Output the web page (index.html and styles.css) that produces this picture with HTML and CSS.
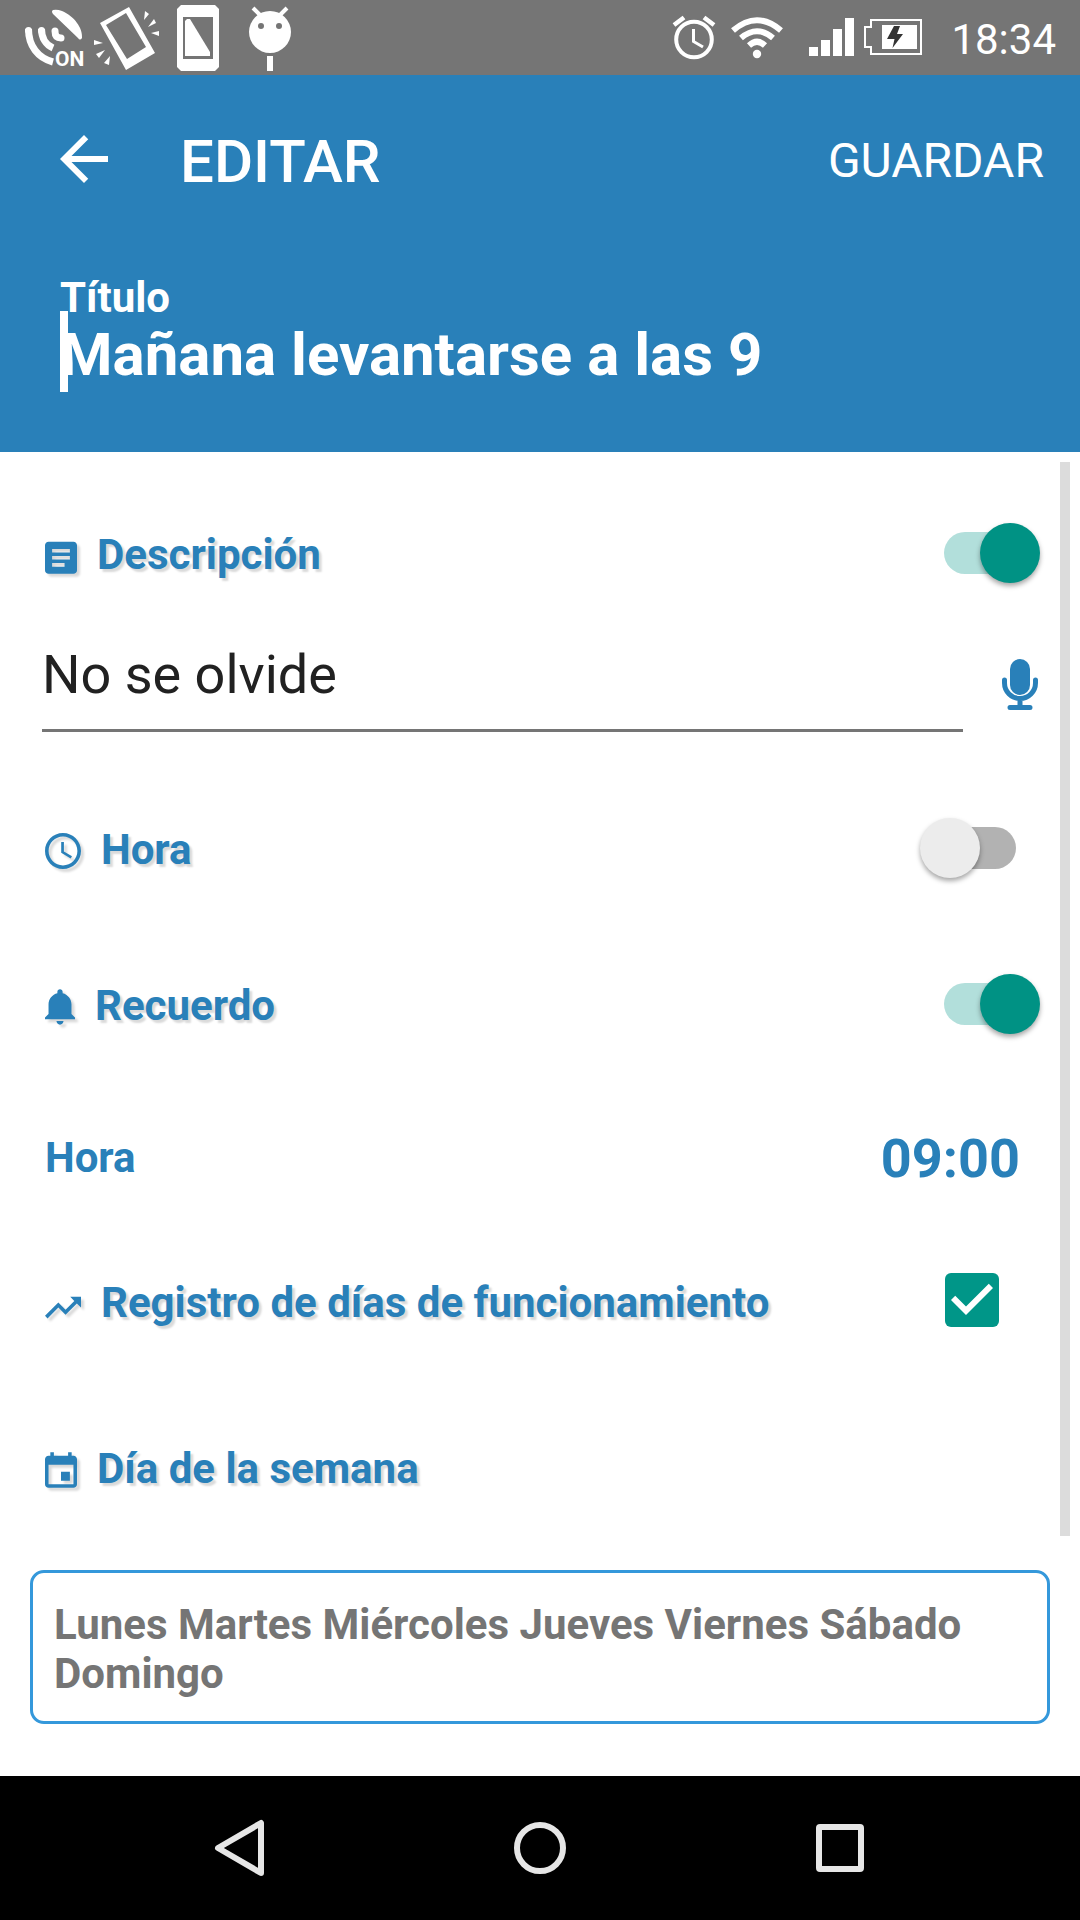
FILE: index.html
```html
<!DOCTYPE html>
<html lang="es">
<head>
<meta charset="utf-8">
<meta name="viewport" content="width=device-width, initial-scale=1">
<title>Editar</title>
<link rel="stylesheet" href="styles.css">
</head>
<body>
<div class="status-bar">
  <div class="status-left">
    <svg class="glyph glyph-location" viewBox="25 0 60 75" width="60" height="75" role="img" aria-label="Ubicación activada">
      <path fill="#fff" d="M53 10Q57 9 62 11C74 16 83 28 82 38Q80 41 78 38L53 14Q51 11 53 10z"/>
      <g fill="none" stroke="#fff" stroke-width="7">
        <path stroke-linecap="round" d="M55 31C55 36 57 38 61 38"/>
        <path d="M41.500 29C41.500 38 46 45 53 48"/>
        <path d="M28.500 29C28.500 46 38 58 53 62"/>
      </g>
      <g fill="#fff"><circle cx="41.500" cy="30.500" r="3.500"/><circle cx="28.500" cy="30.500" r="3.500"/></g>
      <text class="on-text" x="55" y="66">ON</text>
    </svg>
    <svg class="glyph glyph-vibrate" viewBox="94 0 66 75" width="66" height="75" role="img" aria-label="Vibración">
      <path fill="#fff" fill-rule="evenodd" d="M100 23L129 7L155 53L126 70zM106 25L126 13L146 47L127 59z"/>
      <path fill="#fff" d="M145 11L149 14L144 20zM154 19L156 23L148 27zM159 31V36L151 33zM94 40V45L103 43zM96 54L99 58L105 50zM104 63L109 65L110 56z"/>
    </svg>
    <svg class="glyph glyph-sim" viewBox="177 0 42 75" width="42" height="75" role="img" aria-label="Teléfono">
      <path fill="#fff" fill-rule="evenodd" d="M181 5H215L219 9V67L215 71H181L177 67V9zM183 17H213V59H183z"/>
      <path fill="#fff" d="M185 21L187 19H190L210 52V56H185z"/>
    </svg>
    <svg class="glyph glyph-robot" viewBox="249 0 42 75" width="42" height="75" role="img" aria-label="Android">
      <circle cx="270" cy="32" r="21" fill="#fff"/>
      <path stroke="#fff" stroke-width="4" d="M253 8L261 16M287 8L279 16"/>
      <path fill="#fff" d="M267 56H273V71H267z"/>
      <circle cx="261" cy="26" r="3" fill="#757575"/><circle cx="279" cy="26" r="3" fill="#757575"/>
    </svg>
  </div>
  <div class="status-right">
    <svg class="glyph" viewBox="672 0 44 75" width="44" height="75" role="img" aria-label="Alarma">
      <g fill="none" stroke="#fff">
        <circle cx="694" cy="39.500" r="17.800" stroke-width="4"/>
        <path stroke-width="3" d="M693.500 29V41.500L703 47"/>
        <path stroke-width="4.500" d="M674 25L684 17.500M714 25L704 17.500"/>
      </g>
    </svg>
    <svg class="glyph glyph-wifi" viewBox="731 0 52 75" width="52" height="75" role="img" aria-label="Wi-Fi">
      <g fill="none" stroke="#fff" stroke-width="6">
        <path d="M733 30.500Q757 10 781 30.500"/><path d="M741 38Q757 24.500 773 38"/><path d="M749 45.500Q757 38 765 45.500"/>
      </g>
      <circle cx="757" cy="54" r="4.200" fill="#fff"/>
    </svg>
    <svg class="glyph glyph-signal" viewBox="809 0 45 75" width="45" height="75" role="img" aria-label="Señal">
      <path fill="#fff" d="M809 47H818V56H809zM821 40H830V56H821zM833 29H842V56H833zM845 18H854V56H845z"/>
    </svg>
    <svg class="glyph glyph-battery" viewBox="864 0 58 75" width="58" height="75" role="img" aria-label="Batería cargando">
      <path fill="none" stroke="#fff" stroke-width="2" d="M871 20H921V54H871V47H865V27H871z"/>
      <path fill="#fff" d="M882 25H917V49H882z"/>
      <path fill="#333" d="M894 26H900L897 34H903L892.500 48L894.500 39H887z"/>
    </svg>
    <time class="clock">18:34</time>
  </div>
</div>

<header class="header">
  <div class="toolbar">
    <button class="back" type="button" aria-label="Atrás">
      <svg viewBox="0 0 24 24" width="72" height="72"><path fill="#fff" d="M20 11H7.830l5.590-5.590L12 4l-8 8 8 8 1.410-1.410L7.830 13H20v-2z"/></svg>
    </button>
    <h1 class="page-title">EDITAR</h1>
    <button class="save" type="button">GUARDAR</button>
  </div>
  <div class="title-field">
    <label class="title-label" for="title">Título</label>
    <div class="title-box">
      <input class="title-input" id="title" type="text" value="Mañana levantarse a las 9">
      <span class="caret"></span>
    </div>
  </div>
</header>

<main class="content">
  <div class="row">
    <label class="label" for="sw-description">
      <svg viewBox="3 1 18 20" width="32" height="36"><path d="M19 3H5c-1.100 0-2 .9-2 2v14c0 1.100.9 2 2 2h14c1.100 0 2-.9 2-2V5c0-1.100-.9-2-2-2zm-5 14H7v-2h7v2zm3-4H7v-2h10v2zm0-4H7V7h10v2z"/></svg>
      Descripción
    </label>
    <input class="switch" id="sw-description" type="checkbox" role="switch" checked>
  </div>
  <div class="description">
    <input class="description-input" type="text" value="No se olvide" aria-label="Descripción">
    <button class="mic" type="button" aria-label="Dictar">
      <svg viewBox="0 0 36 52" width="36" height="52">
        <rect x="8" y="0" width="20" height="36" rx="10" fill="#2980b9"/>
        <path fill="none" stroke="#2980b9" stroke-width="5" stroke-linecap="round" d="M2.500 21V24A15.500 15.500 0 0 0 33.500 24V21M18 41V48M8 48.500H28"/>
      </svg>
    </button>
  </div>
  <div class="row row-time-switch">
    <label class="label" for="sw-time">
      <svg viewBox="2 2 20 20" width="36" height="36"><path d="M11.990 2C6.470 2 2 6.480 2 12s4.470 10 9.990 10C17.520 22 22 17.520 22 12S17.520 2 11.990 2zM12 20c-4.420 0-8-3.580-8-8s3.580-8 8-8 8 3.580 8 8-3.580 8-8 8zm.5-13H11v6l5.250 3.150.75-1.230-4.500-2.670z"/></svg>
      Hora
    </label>
    <input class="switch" id="sw-time" type="checkbox" role="switch">
  </div>
  <div class="row row-reminder">
    <label class="label" for="sw-reminder">
      <svg viewBox="3 2 17 20" width="30" height="36"><path d="M11.500 22c1.100 0 2-.9 2-2h-4c0 1.100.9 2 2 2zm6.500-6v-5.500c0-3.070-2.130-5.640-5-6.320V3.500c0-.83-.67-1.500-1.500-1.500S10 2.670 10 3.500v.68c-2.870.68-5 3.250-5 6.320V16l-2 2v1h17v-1l-2-2z"/></svg>
      Recuerdo
    </label>
    <input class="switch" id="sw-reminder" type="checkbox" role="switch" checked>
  </div>
  <div class="row row-hour">
    <span class="label label-plain">Hora</span>
    <button class="hour" type="button">09:00</button>
  </div>
  <div class="row row-log">
    <label class="label" for="log">
      <svg viewBox="2 0 20 20" width="36" height="36"><path d="M16 6l2.290 2.290-4.880 4.880-4-4L2 16.590 3.410 18l6-6 4 4 6.300-6.290L22 12V6z"/></svg>
      Registro de días de funcionamiento
    </label>
    <span class="check">
      <input class="check-input" id="log" type="checkbox" checked>
      <svg class="check-mark" viewBox="3 3 18 18" width="54" height="54"><path fill="#fff" d="M10 17l-5-5 1.410-1.410L10 14.170l7.590-7.590L19 8l-9 9z"/></svg>
    </span>
  </div>
  <div class="row row-week">
    <span class="label">
      <svg viewBox="3 1 18 20" width="32" height="36"><path d="M17 12h-5v5h5v-5zM16 1v2H8V1H6v2H5c-1.110 0-1.990.9-1.990 2L3 19c0 1.100.89 2 2 2h14c1.100 0 2-.9 2-2V5c0-1.100-.9-2-2-2h-1V1h-2zm3 18H5V8h14v11z"/></svg>
      Día de la semana
    </span>
  </div>
  <button class="days" type="button">Lunes Martes Miércoles Jueves Viernes Sábado Domingo</button>
  <div class="scroll-thumb"></div>
</main>

<nav class="nav-bar">
  <button class="nav-button" type="button" aria-label="Atrás">
    <svg viewBox="0 0 60 60" width="60" height="60"><path d="M51 5V55L8 30z"/></svg>
  </button>
  <button class="nav-button" type="button" aria-label="Inicio">
    <svg viewBox="0 0 60 60" width="60" height="60"><circle cx="30" cy="30" r="23"/></svg>
  </button>
  <button class="nav-button" type="button" aria-label="Recientes">
    <svg viewBox="0 0 60 60" width="60" height="60"><rect x="9" y="9" width="42" height="42" rx="1"/></svg>
  </button>
</nav>
</body>
</html>
```
FILE: styles.css
```css
* { box-sizing: border-box; }

body {
  margin: 0;
  min-height: 100vh;
  display: flex;
  flex-direction: column;
  background: #fff;
  font-family: Roboto, sans-serif;
}

button, input {
  margin: 0;
  padding: 0;
  border: 0;
  border-radius: 0;
  background: none;
  color: inherit;
  font: inherit;
  outline: 0;
}

svg { display: block; flex: none; }

/* Status bar */
.status-bar {
  display: flex;
  justify-content: space-between;
  height: 75px;
  padding: 0 24px 0 25px;
  background: #757575;
  color: #fff;
}
.status-left, .status-right { display: flex; align-items: center; }
.glyph-location { overflow: visible; }
.glyph-vibrate { margin-left: 9px; }
.glyph-sim { margin-left: 17px; }
.glyph-robot { margin-left: 30px; }
.glyph-wifi { margin-left: 15px; }
.glyph-signal { margin-left: 26px; }
.glyph-battery { margin-left: 10px; }
.on-text { fill: #fff; font-size: 21px; font-weight: 700; }
.clock {
  margin-left: 29px;
  padding-top: 4px;
  font-size: 42px;
  line-height: 49px;
}

/* Header */
.header {
  padding: 0 36px 64px 48px;
  background: #2980b9;
  color: #fff;
}
.toolbar { display: flex; align-items: center; height: 168px; }
.back { width: 72px; height: 72px; }
.page-title {
  flex: 1;
  margin: 0;
  padding: 5px 0 0 60px;
  font-size: 60px;
  font-weight: 500;
  line-height: 70px;
}
.save { padding-top: 3px; font-size: 48px; line-height: 56px; }
.title-field { padding: 30px 0 0 12px; font-weight: 700; }
.title-label { display: block; font-size: 42px; line-height: 49px; }
.title-box { position: relative; }
.title-input {
  display: block;
  width: 100%;
  height: 66px;
  font-size: 60px;
  line-height: 66px;
}
.caret {
  position: absolute;
  top: -11px;
  left: 0;
  width: 8px;
  height: 81px;
  background: #fff;
}

/* Form */
.content {
  position: relative;
  flex: 1;
  padding: 70px 30px 52px;
}
.row {
  display: flex;
  align-items: center;
  justify-content: space-between;
  height: 60px;
  padding: 0 10px 0 15px;
}
.row-time-switch { margin-top: 85px; padding-right: 34px; }
.row-reminder { margin-top: 96px; }
.row-hour { margin-top: 92px; padding-right: 30px; }
.row-log { margin-top: 85px; padding-right: 51px; }
.row-week { margin-top: 106px; }

.label {
  display: flex;
  align-items: center;
  gap: 20px;
  padding-top: 5px;
  color: #2980b9;
  font-size: 42px;
  font-weight: 700;
  line-height: 49px;
  text-shadow: 3px 3px 2px rgba(0, 0, 0, 0.15);
}
.label svg {
  margin-top: 3px;
  overflow: visible;
  fill: #2980b9;
  filter: drop-shadow(3px 3px 1px rgba(0, 0, 0, 0.15));
}
.label-plain { text-shadow: none; }

.switch {
  position: relative;
  flex: none;
  width: 96px;
  height: 60px;
  appearance: none;
}
.switch::before, .switch::after { content: ""; position: absolute; }
.switch::before {
  top: 10px;
  right: 0;
  width: 84px;
  height: 42px;
  border-radius: 21px;
  background: #b2b2b2;
}
.switch::after {
  top: 1px;
  left: 0;
  width: 60px;
  height: 60px;
  border-radius: 50%;
  background: #ececec;
  box-shadow: 0 3px 5px rgba(0, 0, 0, 0.35);
}
.switch:checked::before { right: auto; left: 0; background: #b2dfdb; }
.switch:checked::after { right: 0; left: auto; background: #009284; }

.description {
  display: flex;
  align-items: center;
  gap: 39px;
  margin-top: 48px;
  padding: 0 12px;
}
.description-input {
  flex: 1;
  min-width: 0;
  height: 102px;
  padding: 13px 0 23px;
  border-bottom: 3px solid #757575;
  color: #212121;
  font-size: 54px;
  line-height: 63px;
}
.mic { padding-top: 8px; }

.hour {
  padding-top: 6px;
  color: #2980b9;
  font-size: 54px;
  font-weight: 700;
  line-height: 63px;
}

.check { display: grid; }
.check-input, .check-mark { grid-area: 1 / 1; }
.check-input {
  width: 54px;
  height: 54px;
  border-radius: 6px;
  appearance: none;
}
.check-input:checked { background: #009688; }
.check-mark { pointer-events: none; }

.days {
  display: block;
  width: 100%;
  margin-top: 74px;
  padding: 27px 21px 23px;
  border: 3px solid #3498db;
  border-radius: 14px;
  color: #757575;
  font-size: 42px;
  font-weight: 700;
  line-height: 49px;
  text-align: left;
}

.scroll-thumb {
  position: absolute;
  top: 10px;
  right: 10px;
  bottom: 240px;
  width: 10px;
  background: #dcdcdc;
}

/* System navigation */
.nav-bar {
  display: grid;
  grid-template-columns: repeat(3, 1fr);
  height: 144px;
  padding: 0 90px;
  background: #000;
}
.nav-button { display: grid; place-items: center; }
.nav-button svg {
  fill: none;
  stroke: #e6e6e6;
  stroke-width: 6;
  stroke-linejoin: round;
}
```
